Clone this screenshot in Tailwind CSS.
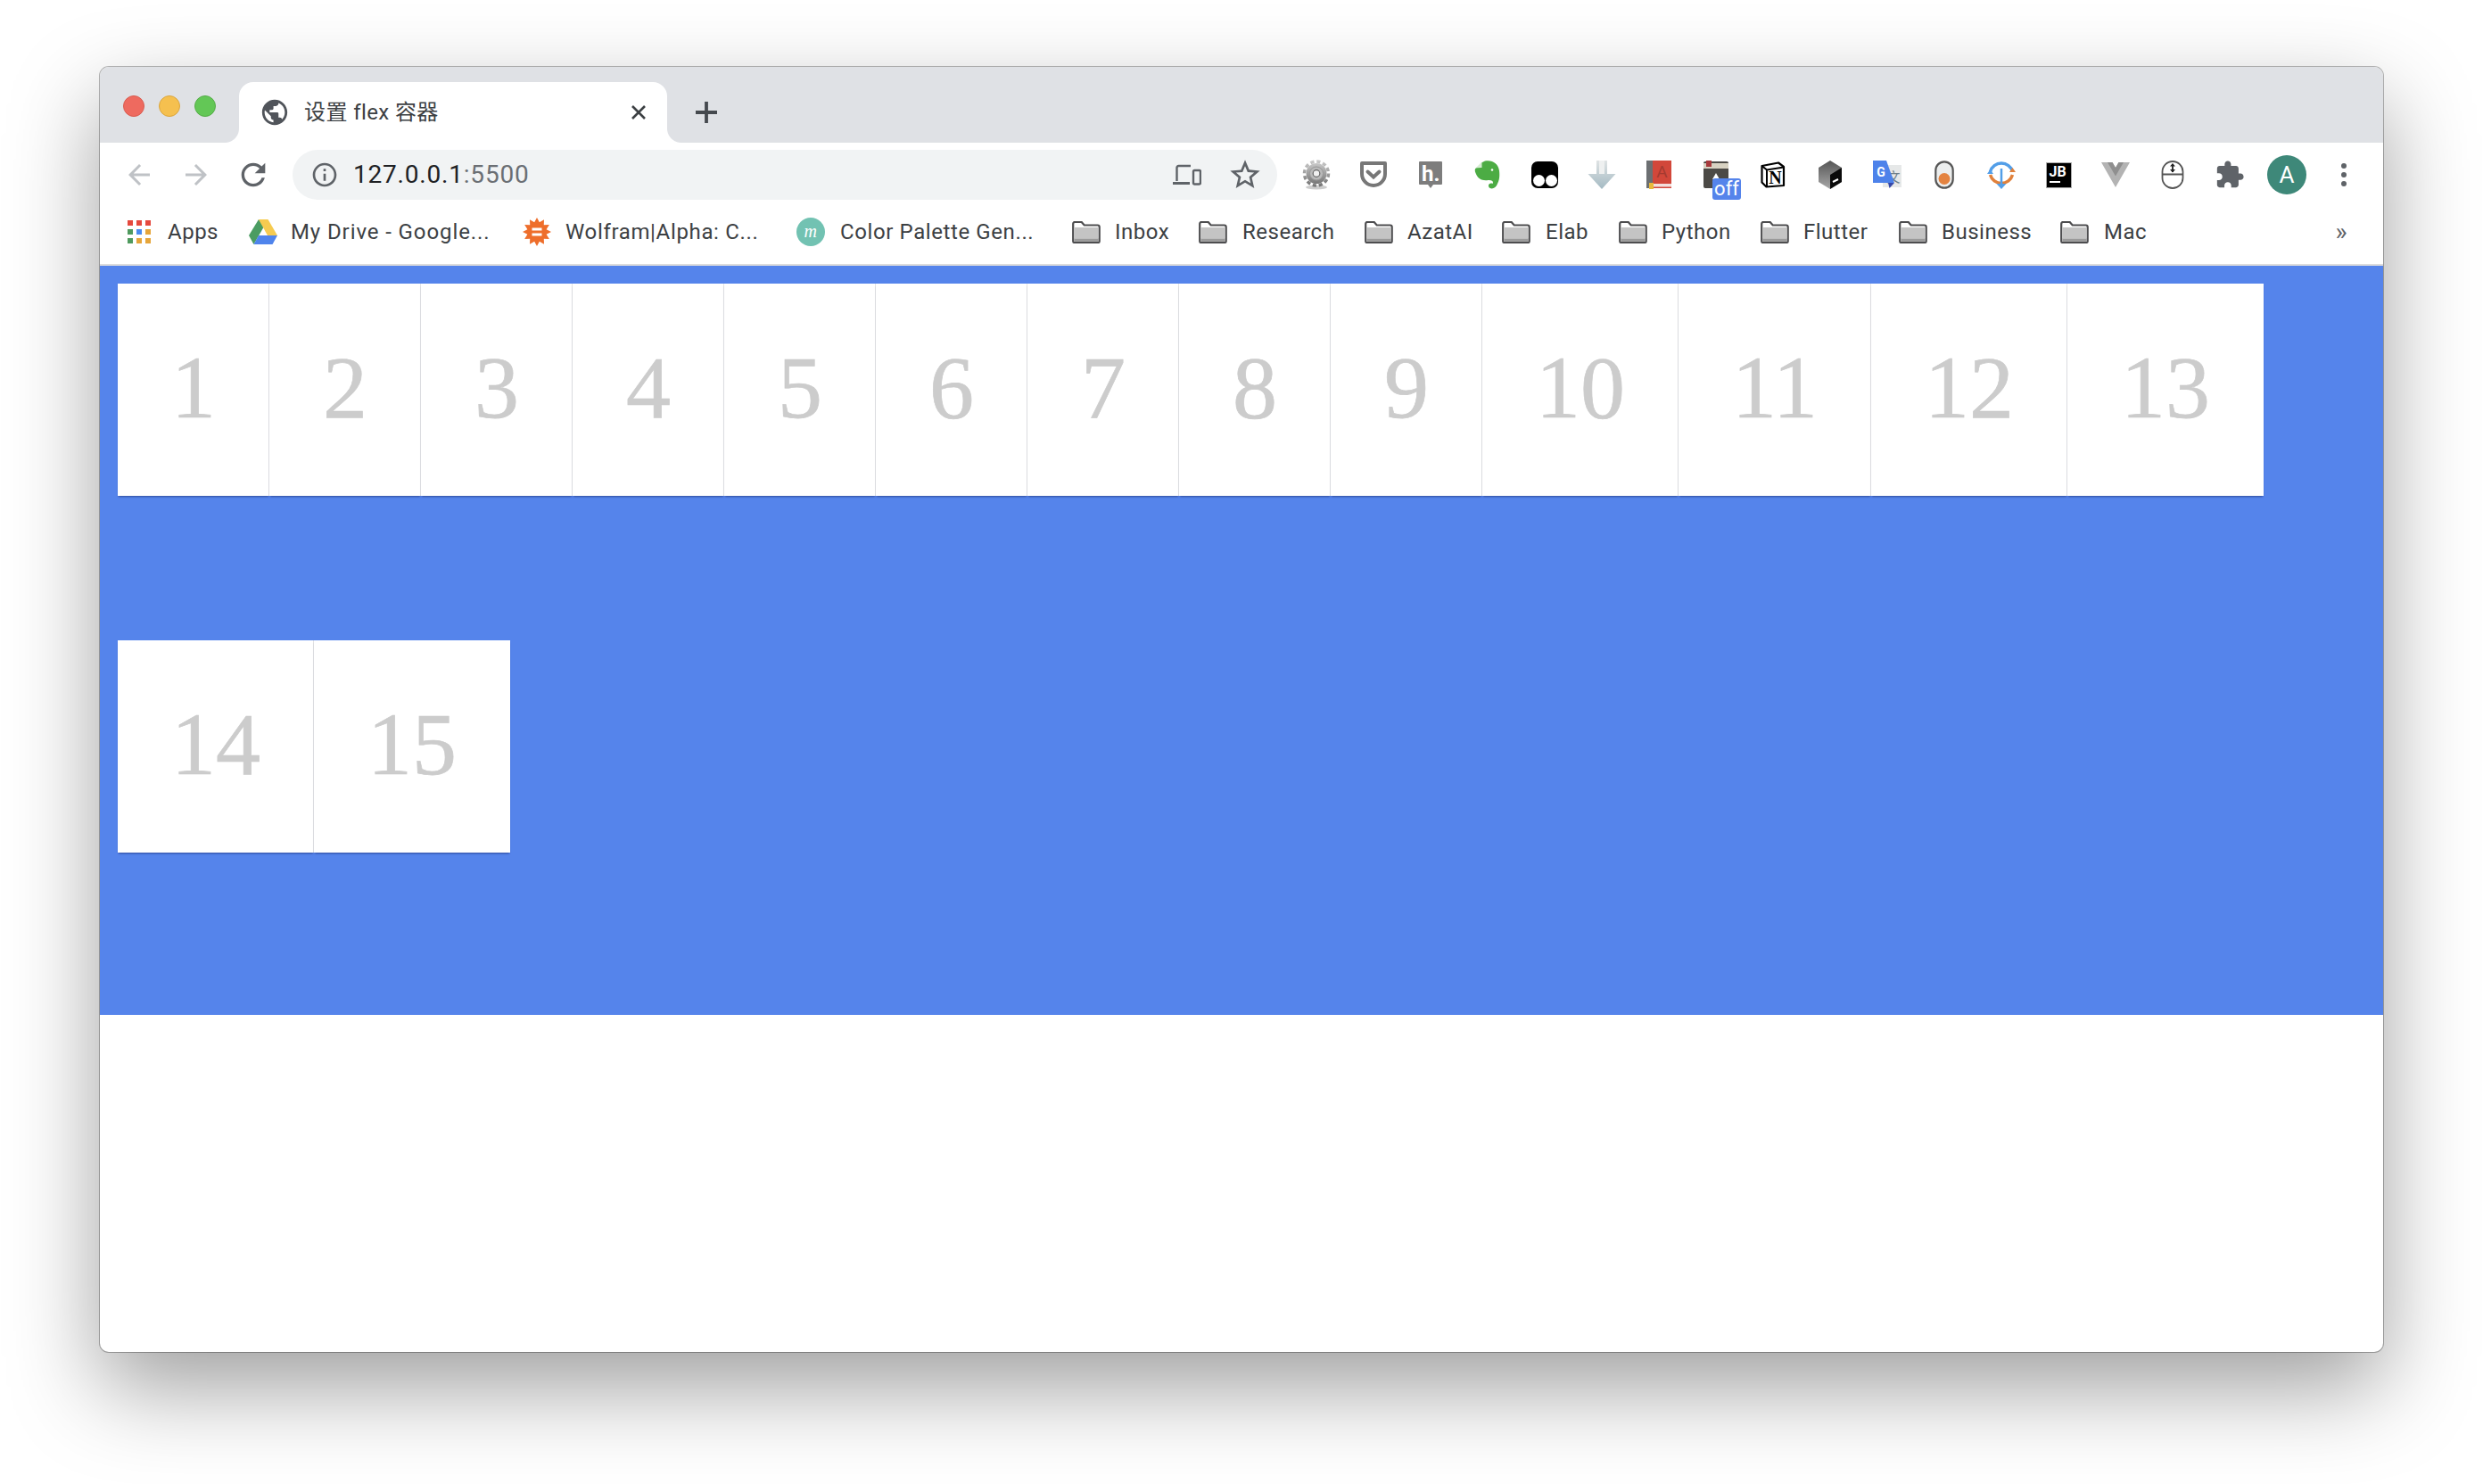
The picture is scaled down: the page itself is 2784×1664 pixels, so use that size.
<!DOCTYPE html>
<html lang="zh">
<head>
  <meta charset="UTF-8" />
  <title>设置 flex 容器</title>
  <script src="https://cdn.jsdelivr.net/npm/@tailwindcss/browser@4"></script>
</head>
<body class="bg-white">
  <svg class="hidden">
    <symbol id="folder" viewBox="0 0 32 25">
      <path d="M1.2 22.5V3a2 2 0 0 1 2-2h7.5l3 3.5h15a2 2 0 0 1 2 2V22.5a1.5 1.5 0 0 1-1.5 1.5H2.700a1.500 1.500 0 0 1-1.500-1.500z" fill="#fff" stroke="#4d4d4f" stroke-width="2.200"/>
      <rect x="2.400" y="7" width="27.200" height="12.500" fill="#c4c4c4"/>
      <rect x="2.400" y="19.500" width="27.200" height="3.400" fill="#9a9a9a"/>
    </symbol>
  </svg>

  <div class="w-[2784px] h-[1664px] overflow-hidden pt-[75px] pl-[112px] font-['Roboto','Noto_Sans_CJK_SC',sans-serif]">
    <div class="w-[2560px] h-[1441px] bg-white rounded-[10px] overflow-hidden shadow-[0_0_0_1px_rgba(0,0,0,0.28),0_40px_100px_0_rgba(0,0,0,0.38)]">

      <!-- tab strip -->
      <div class="h-[85px] bg-[#dfe1e5] flex items-end">
        <div class="w-[156px] h-full flex items-center gap-[16px] pl-[26px] pt-[3px]">
          <span class="w-[24px] h-[24px] rounded-full bg-[#ee6a5f] border border-[#d95c50]"></span>
          <span class="w-[24px] h-[24px] rounded-full bg-[#f5c04f] border border-[#dba63f]"></span>
          <span class="w-[24px] h-[24px] rounded-full bg-[#63c756] border border-[#56ad49]"></span>
        </div>
        <div class="relative w-[480px] h-[68px] bg-white rounded-t-[16px] flex items-center pl-[23px] pr-[22px]">
          <span class="absolute left-[-16px] bottom-0 w-[16px] h-[16px] bg-[radial-gradient(circle_at_0_0,#dfe1e5_15.5px,#fff_16.5px)]"></span>
          <span class="absolute right-[-16px] bottom-0 w-[16px] h-[16px] bg-[radial-gradient(circle_at_100%_0,#dfe1e5_15.5px,#fff_16.5px)]"></span>
          <svg class="w-[34px] h-[34px] fill-[#50545a]" viewBox="0 0 24 24"><path d="M12 2C6.480 2 2 6.480 2 12s4.480 10 10 10 10-4.480 10-10S17.520 2 12 2zm-1 17.930c-3.950-.490-7-3.850-7-7.930 0-.620.080-1.210.210-1.790L9 15v1c0 1.100.900 2 2 2v1.930zm6.900-2.540c-.260-.810-1-1.390-1.900-1.390h-1v-3c0-.550-.450-1-1-1H8v-2h2c.550 0 1-.450 1-1V7h2c1.100 0 2-.900 2-2v-.410c2.930 1.190 5 4.060 5 7.410 0 2.080-.800 3.970-2.100 5.390z"/></svg>
          <span class="ml-[16px] text-[24px] tracking-[0.4px] text-[#3c4043]">设置 flex 容器</span>
          <svg class="ml-auto w-[20px] h-[20px] stroke-[#3c4043]" viewBox="0 0 20 20" stroke-width="2.600"><path d="M3 3l14 14M17 3L3 17"/></svg>
        </div>
        <div class="h-[68px] flex items-center pl-[32px]">
          <svg class="w-[24px] h-[24px] stroke-[#45494e]" viewBox="0 0 24 24" stroke-width="3.800"><path d="M12 0v24M0 12h24"/></svg>
        </div>
      </div>

      <!-- toolbar -->
      <div class="h-[72px] flex items-start pt-[8px] pl-[12px]">
        <div class="w-[64px] h-[56px] flex items-center justify-center">
          <svg class="w-[36px] h-[36px] fill-[#bfc2c6]" viewBox="0 0 24 24"><path d="M20 11H7.830l5.590-5.590L12 4l-8 8 8 8 1.410-1.410L7.830 13H20v-2z"/></svg>
        </div>
        <div class="w-[64px] h-[56px] flex items-center justify-center">
          <svg class="w-[36px] h-[36px] fill-[#bfc2c6]" viewBox="0 0 24 24"><path d="M4 11h12.170l-5.590-5.590L12 4l8 8-8 8-1.410-1.410L16.170 13H4v-2z"/></svg>
        </div>
        <div class="w-[64px] h-[56px] flex items-center justify-center">
          <svg class="w-[40px] h-[40px] fill-[#5f6368]" viewBox="0 0 24 24"><path d="M17.650 6.350C16.200 4.900 14.210 4 12 4c-4.420 0-7.990 3.580-7.990 8s3.570 8 7.990 8c3.730 0 6.840-2.550 7.730-6h-2.080c-.820 2.330-3.040 4-5.650 4-3.310 0-6-2.690-6-6s2.690-6 6-6c1.660 0 3.140.690 4.220 1.780L13 11h7V4l-2.350 2.350z"/></svg>
        </div>
        <!-- address bar -->
        <div class="ml-[12px] w-[1104px] h-[56px] rounded-full bg-[#f1f3f4] flex items-center pl-[20px] pr-[16px]">
          <svg class="w-[32px] h-[32px] fill-[#5f6368]" viewBox="0 0 24 24"><path d="M11 7h2v2h-2zm0 4h2v6h-2zm1-9C6.480 2 2 6.480 2 12s4.480 10 10 10 10-4.480 10-10S17.520 2 12 2zm0 18c-4.410 0-8-3.590-8-8s3.590-8 8-8 8 3.590 8 8-3.590 8-8 8z"/></svg>
          <span class="ml-[16px] text-[28px] tracking-[0.8px] text-[#202124]">127.0.0.1<span class="text-[#6b6f74]">:5500</span></span>
          <svg class="ml-auto w-[32px] h-[28px]" viewBox="0 0 32 28" fill="none" stroke="#5f6368" stroke-width="2.400"><path d="M20 4H6.500a2 2 0 0 0-2 2v15"/><path d="M0 23.500h19" stroke-width="3"/><rect x="23" y="9" width="8" height="15.500" rx="1.500"/></svg>
          <svg class="ml-[29px] w-[40px] h-[40px] fill-[#5f6368]" viewBox="0 0 24 24"><path d="M22 9.240l-7.190-.620L12 2 9.190 8.630 2 9.240l5.460 4.730L5.820 21 12 17.270 18.180 21l-1.630-7.030L22 9.240zM12 15.400l-3.760 2.270 1-4.280-3.320-2.880 4.380-.380L12 6.100l1.710 4.040 4.380.380-3.320 2.880 1 4.280L12 15.400z"/></svg>
        </div>
        <!-- extensions -->
        <div class="ml-[12px] flex">
          <div class="w-[64px] h-[56px] flex items-center justify-center">
            <svg class="w-[32px] h-[34px]" viewBox="0 0 32 34"><defs><linearGradient id="gr" x1="0" y1="0" x2="0" y2="1"><stop offset="0" stop-color="#c8c8c8"/><stop offset="1" stop-color="#777"/></linearGradient></defs><ellipse cx="16" cy="31" rx="12" ry="2.500" fill="#ccc"/><circle cx="16" cy="15.500" r="11.500" fill="url(#gr)"/><circle cx="16" cy="15.500" r="13.500" fill="none" stroke="url(#gr)" stroke-width="3.500" stroke-dasharray="4.200 2.850"/><circle cx="16" cy="15.500" r="7.500" fill="#b9b9b9" stroke="#999"/><circle cx="16" cy="15.500" r="3.800" fill="#f1f1f1" stroke="#666" stroke-width="1.200"/></svg>
          </div>
          <div class="w-[64px] h-[56px] flex items-center justify-center">
            <svg class="w-[32px] h-[30px]" viewBox="0 0 32 30" fill="none" stroke="#777" stroke-width="4"><path d="M3 2h26v12a13 13 0 0 1-26 0z" stroke-linejoin="round"/><path d="M9.500 11.500l6.500 6 6.500-6" stroke-linecap="round"/></svg>
          </div>
          <div class="w-[64px] h-[56px] flex items-center justify-center">
            <svg class="w-[28px] h-[32px]" viewBox="0 0 28 32"><path d="M2 1h24a1 1 0 0 1 1 1v24a1 1 0 0 1-1 1h-9l-3 4-3-4H2a1 1 0 0 1-1-1V2a1 1 0 0 1 1-1z" fill="#7d7d7d"/><text x="4" y="23" font-family="Roboto" font-weight="700" font-size="24" fill="#fff">h.</text></svg>
          </div>
          <div class="w-[64px] h-[56px] flex items-center justify-center">
            <svg class="w-[30px] h-[32px]" viewBox="0 0 30 32"><path d="M8 2.500L12 .5c8-1.500 15 2.500 16 11 .7 6.500 0 11-2 14.500-1.500 5-7 7-9.500 4-1.800-2.500 1-5.500 4-4 1.500-2.500-.5-4.500-5-4C9 22.800 4 21 1.500 14 .2 11 .5 8.500 3 8.200L8 8z" fill="#4cac44"/><path d="M8.500 1.500v6.500H2z" fill="#d6ecd3"/><circle cx="20" cy="10.500" r="1.300" fill="#fff"/></svg>
          </div>
          <div class="w-[64px] h-[56px] flex items-center justify-center">
            <div class="w-[30px] h-[30px] rounded-[7px] bg-black flex items-end justify-center gap-[1px] pb-[2px]">
              <span class="w-[13px] h-[13px] rounded-full bg-white"></span>
              <span class="w-[13px] h-[13px] rounded-full bg-white"></span>
            </div>
          </div>
          <div class="w-[64px] h-[56px] flex items-center justify-center">
            <svg class="w-[32px] h-[32px]" viewBox="0 0 32 32"><defs><linearGradient id="ar" x1="0" y1="0" x2="0" y2="1"><stop offset="0" stop-color="#dfe3e4"/><stop offset="1" stop-color="#a4bac3"/></linearGradient></defs><path d="M10 0h12v15h9.500L16 32 .5 15H10z" fill="url(#ar)"/><path d="M13 0h6v15h-6z" fill="#eef0f0"/></svg>
          </div>
          <div class="w-[64px] h-[56px] flex items-center justify-center">
            <svg class="w-[28px] h-[32px]" viewBox="0 0 28 32"><rect x="0" y="0" width="7" height="31" fill="#6c6f72"/><rect x="7" y="0" width="21" height="26" fill="#d2473a"/><rect x="7" y="26" width="21" height="5" fill="#f3dfdc"/><rect x="7" y="29.500" width="21" height="1.500" fill="#d2473a"/><rect x="3" y="25" width="5" height="7" fill="#e8b93c"/><text x="17.500" y="19" text-anchor="middle" font-family="Roboto" font-size="19" fill="#a53a30">A</text></svg>
          </div>
          <div class="relative w-[64px] h-[56px] flex items-center justify-center">
            <svg class="w-[28px] h-[32px]" viewBox="0 0 28 32"><rect x="0" y="1" width="28" height="30" rx="2" fill="#4c4a46"/><rect x="0" y="3" width="28" height="6" fill="#d8d2c2"/><rect x="3" y="0" width="6" height="7" fill="#a73a3c"/><path d="M14 14l4 7h-8z" fill="#fff"/></svg>
            <span class="absolute left-[28px] top-[32px] w-[32px] h-[24px] rounded-[3px] bg-[#5584eb] text-white text-[22px] leading-[23px] text-center">off</span>
          </div>
          <div class="w-[64px] h-[56px] flex items-center justify-center">
            <svg class="w-[28px] h-[30px]" viewBox="0 0 28 30"><path d="M1.500 5L20 1.500l6 4.500v21L6.500 28.500l-5-5z" fill="#fff" stroke="#000" stroke-width="2.200" stroke-linejoin="round"/><path d="M1.500 5l5.500 4.500L26 6.500M7 9.500v19" fill="none" stroke="#000" stroke-width="2"/><text x="16.500" y="25" text-anchor="middle" font-family="Liberation Serif" font-weight="700" font-size="20" fill="#000">N</text></svg>
          </div>
          <div class="w-[64px] h-[56px] flex items-center justify-center">
            <svg class="w-[28px] h-[32px]" viewBox="0 0 28 32"><defs><linearGradient id="cb" x1="0" y1="0" x2="0" y2="1"><stop offset="0" stop-color="#555"/><stop offset="1" stop-color="#a8a8a8"/></linearGradient></defs><path d="M14 0l13 8v16l-13 8-13-8V8z" fill="url(#cb)"/><path d="M27 8v16l-13 8V16z" fill="#0a0a0a"/><path d="M17 24l6-3" stroke="#fff" stroke-width="2"/></svg>
          </div>
          <div class="w-[64px] h-[56px] flex items-center justify-center">
            <svg class="w-[32px] h-[32px]" viewBox="0 0 32 32"><rect x="11" y="5" width="21" height="25" fill="#e6e8e8"/><text x="23" y="24" text-anchor="middle" font-family="Noto Sans CJK SC" font-size="15" fill="#6f7f88">文</text><path d="M0 0h15l9 25H0z" fill="#4d82ea"/><path d="M17 25h7l-5.500 6z" fill="#3648a8"/><text x="9" y="18" text-anchor="middle" font-family="Roboto" font-weight="700" font-size="14" fill="#fff">G</text></svg>
          </div>
          <div class="w-[64px] h-[56px] flex items-center justify-center">
            <svg class="w-[22px] h-[32px]" viewBox="0 0 22 32"><rect x="1.300" y="1.300" width="19.400" height="29.400" rx="9.700" fill="#eceeee" stroke="#565656" stroke-width="2.200"/><circle cx="11" cy="20.500" r="6.500" fill="#e48340"/></svg>
          </div>
          <div class="w-[64px] h-[56px] flex items-center justify-center">
            <svg class="w-[32px] h-[32px]" viewBox="0 0 32 32" fill="none"><path d="M3.500 12.500a13 13 0 0 1 25 0" stroke="#529ee8" stroke-width="3.500"/><path d="M3.500 16a13 13 0 0 0 25 0" stroke="#e0813c" stroke-width="3.500"/><path d="M16 9v17" stroke="#529ee8" stroke-width="2.500"/><path d="M10.500 26h11L16 32z" fill="#529ee8"/><path d="M0 15l3.500-5 3.500 5z" fill="#529ee8"/><path d="M25 13l3.500-5 3.500 5z" fill="#e0813c"/></svg>
          </div>
          <div class="w-[64px] h-[56px] flex items-center justify-center">
            <div class="w-[29px] h-[29px] bg-black border border-[#aaa] flex flex-col px-[3px] pt-[1px] text-white font-bold text-[16px] leading-[17px]">JB<span class="mt-[2px] w-[12px] h-[2px] bg-white"></span></div>
          </div>
          <div class="w-[64px] h-[56px] flex items-center justify-center">
            <svg class="w-[32px] h-[30px]" viewBox="0 0 32 30"><path d="M0 1h12.500L16 7l3.500-6H32L16 29z" fill="#b3b3b3"/><path d="M7 1h5.500L16 7l3.500-6H25L16 16.500z" fill="#8f8f8f"/></svg>
          </div>
          <div class="w-[64px] h-[56px] flex items-center justify-center">
            <svg class="w-[26px] h-[32px]" viewBox="0 0 26 32" fill="none" stroke="#555" stroke-width="1.800"><rect x="1.500" y="1" width="23" height="30" rx="11.500"/><path d="M1.500 15.500h23"/><path d="M13 4v9" stroke="#222"/><path d="M10 6.500L13 3l3 3.500zM10 10l3 3.500 3-3.500z" fill="#222" stroke="none"/></svg>
          </div>
          <div class="w-[64px] h-[56px] flex items-center justify-center">
            <svg class="w-[34px] h-[34px] fill-[#5f6368]" viewBox="0 0 24 24"><path d="M20.500 11H19V7c0-1.100-.900-2-2-2h-4V3.500C13 2.120 11.880 1 10.500 1S8 2.120 8 3.500V5H4c-1.100 0-1.990.900-1.990 2v3.800H3.500c1.490 0 2.700 1.210 2.700 2.700s-1.210 2.700-2.700 2.700H2V20c0 1.100.900 2 2 2h3.800v-1.500c0-1.490 1.210-2.700 2.700-2.700 1.490 0 2.700 1.210 2.700 2.700V22H17c1.100 0 2-.900 2-2v-4h1.500c1.380 0 2.500-1.120 2.500-2.500S21.880 11 20.500 11z"/></svg>
          </div>
          <div class="w-[64px] h-[56px] flex items-center justify-center">
            <span class="w-[44px] h-[44px] rounded-full bg-[#3e8879] text-white text-[26px] leading-[44px] text-center">A</span>
          </div>
          <div class="w-[64px] h-[56px] flex flex-col items-center justify-center gap-[4px]">
            <span class="w-[6px] h-[6px] rounded-full bg-[#5f6368]"></span>
            <span class="w-[6px] h-[6px] rounded-full bg-[#5f6368]"></span>
            <span class="w-[6px] h-[6px] rounded-full bg-[#5f6368]"></span>
          </div>
        </div>
      </div>

      <!-- bookmarks -->
      <div class="h-[66px] border-b-2 border-[#dcdcdc] flex items-center pl-[31px] pb-[8px] text-[24px] tracking-[0.5px] text-[#3c4043]">
        <div class="w-[136px] flex items-center">
          <div class="w-[26px] grid grid-cols-3 gap-[4px]">
            <span class="h-[6px] bg-[#e5493e]"></span><span class="h-[6px] bg-[#e5493e]"></span><span class="h-[6px] bg-[#e5493e]"></span>
            <span class="h-[6px] bg-[#4f9a5e]"></span><span class="h-[6px] bg-[#4a8bf0]"></span><span class="h-[6px] bg-[#e6a53a]"></span>
            <span class="h-[6px] bg-[#4f9a5e]"></span><span class="h-[6px] bg-[#e6a53a]"></span><span class="h-[6px] bg-[#e6a53a]"></span>
          </div>
          <span class="ml-[19px]">Apps</span>
        </div>
        <div class="w-[307px] flex items-center">
          <svg class="w-[32px] h-[28px]" viewBox="0 0 32 28"><path d="M11 0L0 18l5.500 10L17 8z" fill="#4a9c62"/><path d="M11 0h10.500L32 18H21z" fill="#f6cb50"/><path d="M5.500 28L11 18h21l-5.500 10z" fill="#4f84ec"/></svg>
          <span class="ml-[15px] tracking-[0.9px]">My Drive - Google...</span>
        </div>
        <div class="w-[307px] flex items-center">
          <svg class="w-[32px] h-[32px]" viewBox="0 0 32 32"><path d="M16 0l2.850 5.370L24 2.140l-.220 6.080L29.860 8l-3.230 5.150L32 16l-5.370 2.850L29.860 24l-6.080-.220L24 29.860l-5.150-3.230L16 32l-2.850-5.370L8 29.860l.220-6.080L2.140 24l3.230-5.150L0 16l5.370-2.850L2.140 8l6.080.220L8 2.140l5.150 3.230z" fill="#ee6e2b"/><path d="M10.500 11.500h11v3h-11zM10.500 17.500h11v3h-11z" fill="#fff"/></svg>
          <span class="ml-[16px] tracking-[0.65px]">Wolfram|Alpha: C...</span>
        </div>
        <div class="w-[309px] flex items-center">
          <span class="w-[32px] h-[32px] rounded-full bg-[#72c2b2] text-white font-['Liberation_Serif',serif] italic text-[20px] leading-[30px] text-center">m</span>
          <span class="ml-[17px] tracking-[0.6px]">Color Palette Gen...</span>
        </div>
        <div class="w-[142px] flex items-center"><svg class="w-[32px] h-[25px]"><use href="#folder"/></svg><span class="ml-[16px]">Inbox</span></div>
        <div class="w-[186px] flex items-center"><svg class="w-[32px] h-[25px]"><use href="#folder"/></svg><span class="ml-[17px]">Research</span></div>
        <div class="w-[154px] flex items-center"><svg class="w-[32px] h-[25px]"><use href="#folder"/></svg><span class="ml-[16px]">AzatAI</span></div>
        <div class="w-[131px] flex items-center"><svg class="w-[32px] h-[25px]"><use href="#folder"/></svg><span class="ml-[17px]">Elab</span></div>
        <div class="w-[159px] flex items-center"><svg class="w-[32px] h-[25px]"><use href="#folder"/></svg><span class="ml-[16px]">Python</span></div>
        <div class="w-[155px] flex items-center"><svg class="w-[32px] h-[25px]"><use href="#folder"/></svg><span class="ml-[16px]">Flutter</span></div>
        <div class="w-[181px] flex items-center"><svg class="w-[32px] h-[25px]"><use href="#folder"/></svg><span class="ml-[16px]">Business</span></div>
        <div class="flex items-center"><svg class="w-[32px] h-[25px]"><use href="#folder"/></svg><span class="ml-[17px]">Mac</span></div>
        <span class="ml-auto mr-[40px] text-[28px] leading-[28px] text-[#5f6368]">»</span>
      </div>

      <!-- flex container -->
      <div class="h-[840px] bg-[#5584eb] flex flex-wrap content-start gap-y-[162px] pt-[20px] px-[20px] font-['Liberation_Serif',serif] text-[100px] leading-[118px] text-[#cccccc] [-webkit-text-stroke:0.7px_#cccccc]">
        <div class="bg-white border-r border-[#e6e6e6] pt-[58px] pb-[62px] pl-[60px] pr-[59px] shadow-[0_2px_2px_-1px_rgba(30,50,120,0.7)]">1</div>
        <div class="bg-white border-r border-[#e6e6e6] pt-[58px] pb-[62px] pl-[60px] pr-[59px] shadow-[0_2px_2px_-1px_rgba(30,50,120,0.7)]">2</div>
        <div class="bg-white border-r border-[#e6e6e6] pt-[58px] pb-[62px] pl-[60px] pr-[59px] shadow-[0_2px_2px_-1px_rgba(30,50,120,0.7)]">3</div>
        <div class="bg-white border-r border-[#e6e6e6] pt-[58px] pb-[62px] pl-[60px] pr-[59px] shadow-[0_2px_2px_-1px_rgba(30,50,120,0.7)]">4</div>
        <div class="bg-white border-r border-[#e6e6e6] pt-[58px] pb-[62px] pl-[60px] pr-[59px] shadow-[0_2px_2px_-1px_rgba(30,50,120,0.7)]">5</div>
        <div class="bg-white border-r border-[#e6e6e6] pt-[58px] pb-[62px] pl-[60px] pr-[59px] shadow-[0_2px_2px_-1px_rgba(30,50,120,0.7)]">6</div>
        <div class="bg-white border-r border-[#e6e6e6] pt-[58px] pb-[62px] pl-[60px] pr-[59px] shadow-[0_2px_2px_-1px_rgba(30,50,120,0.7)]">7</div>
        <div class="bg-white border-r border-[#e6e6e6] pt-[58px] pb-[62px] pl-[60px] pr-[59px] shadow-[0_2px_2px_-1px_rgba(30,50,120,0.7)]">8</div>
        <div class="bg-white border-r border-[#e6e6e6] pt-[58px] pb-[62px] pl-[60px] pr-[59px] shadow-[0_2px_2px_-1px_rgba(30,50,120,0.7)]">9</div>
        <div class="bg-white border-r border-[#e6e6e6] pt-[58px] pb-[62px] pl-[60px] pr-[59px] shadow-[0_2px_2px_-1px_rgba(30,50,120,0.7)]">10</div>
        <div class="bg-white border-r border-[#e6e6e6] pt-[58px] pb-[62px] pl-[60px] pr-[59px] shadow-[0_2px_2px_-1px_rgba(30,50,120,0.7)]"><span class="tracking-[-4px]">1</span>1</div>
        <div class="bg-white border-r border-[#e6e6e6] pt-[58px] pb-[62px] pl-[60px] pr-[59px] shadow-[0_2px_2px_-1px_rgba(30,50,120,0.7)]">12</div>
        <div class="bg-white pt-[58px] pb-[62px] px-[60px] shadow-[0_2px_2px_-1px_rgba(30,50,120,0.7)]">13</div>
        <div class="bg-white border-r border-[#e6e6e6] pt-[58px] pb-[62px] pl-[60px] pr-[59px] shadow-[0_2px_2px_-1px_rgba(30,50,120,0.7)]">14</div>
        <div class="bg-white pt-[58px] pb-[62px] px-[60px] shadow-[0_2px_2px_-1px_rgba(30,50,120,0.7)]">15</div>
      </div>
    </div>
  </div>
</body>
</html>
